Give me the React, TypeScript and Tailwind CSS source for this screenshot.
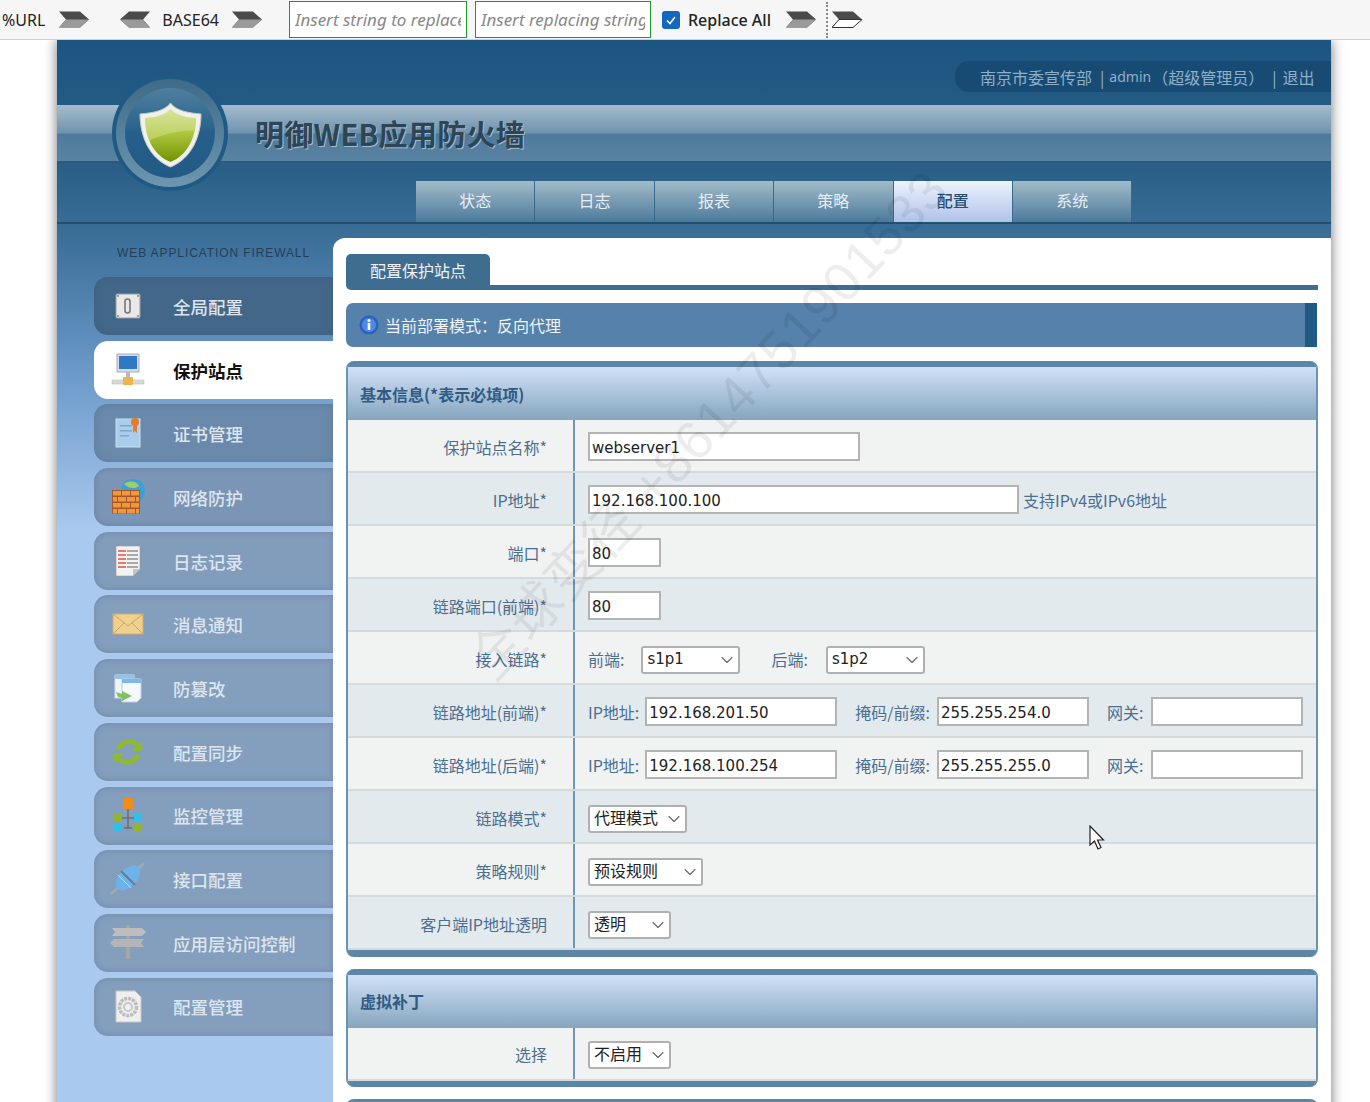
import React from 'react';
import { ChevronDown } from 'lucide-react';

const Arrow = ({ flip, hollow }: { flip?: boolean; hollow?: boolean }) => (
  <svg width="30" height="17" viewBox="0 0 30 17" className={flip ? '-scale-x-100' : ''}>
    <path d="M0 0.5H21L30 8.5L21 16.5H0L7 8.5Z" fill="#4a4a4a" />
    <path d="M7 8.5H30L21 16.5H0Z" fill={hollow ? '#fff' : '#9a9a9a'} stroke={hollow ? '#333' : 'none'} strokeWidth="1" />
  </svg>
);

const Logo = () => (
  <svg width="118" height="118" viewBox="0 0 118 118" className="absolute left-[54px] top-[35px]">
    <defs>
      <linearGradient id="ring" x1="0" y1="0" x2="0" y2="1">
        <stop offset="0" stopColor="#3f6a88" />
        <stop offset="1" stopColor="#6d97b0" />
      </linearGradient>
      <linearGradient id="core" x1="0" y1="0" x2="0" y2="1">
        <stop offset="0" stopColor="#4f7f9f" />
        <stop offset="0.5" stopColor="#26608a" />
        <stop offset="1" stopColor="#215a84" />
      </linearGradient>
      <linearGradient id="shield" x1="0" y1="0" x2="0" y2="1">
        <stop offset="0" stopColor="#d3e08a" />
        <stop offset="0.5" stopColor="#a9c23a" />
        <stop offset="1" stopColor="#6f9400" />
      </linearGradient>
    </defs>
    <circle cx="59" cy="58" r="58" fill="#1f5a85" />
    <circle cx="59" cy="58" r="54" fill="url(#ring)" />
    <circle cx="59" cy="58" r="45" fill="url(#core)" />
    <path d="M59.5 28C65 36 78 38 90 39C90 62 80 84 59.5 92C39 84 29 62 29 39C41 38 54 36 59.5 28Z" fill="#f1f1ec" stroke="#c9c9c4" />
    <path d="M59.5 34C65 40 76 43 85 43C85 62 77 80 59.5 87C42 80 34 62 34 43C43 43 54 40 59.5 34Z" fill="url(#shield)" />
    <path d="M59.5 34C65 40 76 43 85 43C85 48 84 53 83 56C68 55 50 60 38 66C35 58 34 50 34 43C43 43 54 40 59.5 34Z" fill="#e6efb4" opacity="0.35" />
  </svg>
);

const GlobalIcon = () => (
  <svg width="40" height="40" viewBox="0 0 40 40">
    <rect x="8" y="8" width="24" height="24" rx="1" fill="#e8e8e8" stroke="#999" />
    <circle cx="10" cy="10" r="1" fill="#888" /><circle cx="30" cy="10" r="1" fill="#888" />
    <circle cx="10" cy="30" r="1" fill="#888" /><circle cx="30" cy="30" r="1" fill="#888" />
    <rect x="17" y="13" width="5" height="14" rx="2.5" fill="none" stroke="#777" strokeWidth="1.6" />
  </svg>
);
const SiteIcon = () => (
  <svg width="40" height="40" viewBox="0 0 40 40">
    <rect x="9" y="4" width="22" height="18" fill="#d8dde2" stroke="#aab" />
    <rect x="11" y="6" width="18" height="13" fill="#2f78c4" />
    <rect x="18" y="22" width="4" height="6" fill="#b5bcc2" />
    <rect x="4" y="30" width="32" height="4" fill="#d4dcd8" stroke="#b0bab4" strokeWidth="0.5" />
    <rect x="15" y="27" width="10" height="8" rx="1" fill="#eeb54c" />
  </svg>
);
const CertIcon = () => (
  <svg width="40" height="40" viewBox="0 0 40 40">
    <rect x="8" y="6" width="24" height="28" fill="#a9cdea" stroke="#c9e0f2" />
    <rect x="12" y="12" width="12" height="1.5" fill="#7fa8c8" /><rect x="12" y="17" width="12" height="1.5" fill="#7fa8c8" />
    <rect x="12" y="22" width="9" height="1.5" fill="#7fa8c8" />
    <circle cx="27" cy="9" r="4" fill="#e9792b" /><path d="M25 11H29V20L27 18L25 20Z" fill="#e9792b" />
  </svg>
);
const WallIcon = () => (
  <svg width="40" height="40" viewBox="0 0 40 40">
    <circle cx="25" cy="14" r="12" fill="#3d9fd8" />
    <path d="M16 7C21 3 29 4 31 9C28 12 20 12 16 7Z" fill="#9ccf6a" />
    <rect x="4" y="13" width="28" height="24" fill="#a9562a" />
    {[14, 20, 26, 32].map(y => (
      <g key={y}>
        {(y % 12 === 2 ? [5, 14, 23] : [5, 10, 19, 28]).map(x => (
          <rect key={x} x={x} y={y} width={y % 12 === 2 ? 8 : x === 5 ? 4 : x === 28 ? 3 : 8} height="4.5" fill="#ef9a3a" />
        ))}
      </g>
    ))}
  </svg>
);
const LogIcon = () => (
  <svg width="40" height="40" viewBox="0 0 40 40">
    <path d="M8 5H32V28L25 35H8Z" fill="#f2f2f0" stroke="#999" strokeWidth="0.6" />
    <path d="M25 35L25 28H32Z" fill="#c4c4c0" />
    {[9, 13, 17, 21, 25].map(y => (
      <g key={y}><rect x="10" y={y} width="8" height="2" fill="#e47a72" /><rect x="19" y={y} width="11" height="2" fill="#a8a8a8" /></g>
    ))}
  </svg>
);
const MailIcon = () => (
  <svg width="40" height="40" viewBox="0 0 40 40">
    <rect x="5" y="10" width="30" height="20" fill="#efd08e" stroke="#d2ad68" />
    <path d="M5 10L20 22L35 10M5 30L16 19M35 30L24 19" fill="none" stroke="#cda762" />
  </svg>
);
const TamperIcon = () => (
  <svg width="40" height="40" viewBox="0 0 40 40">
    <rect x="7" y="7" width="19" height="23" fill="#eef4fa" stroke="#d0dde8" />
    <rect x="7" y="7" width="19" height="4" fill="#8ec3ee" />
    <path d="M14 11H33V30L29 34H14Z" fill="#f5f9fc" stroke="#c0d0de" />
    <rect x="14" y="11" width="19" height="4" fill="#7db8ea" />
    <path d="M8 24L14 26V23L24 28L14 33V30L10 29Z" fill="#7fc261" />
  </svg>
);
const SyncIcon = () => (
  <svg width="40" height="40" viewBox="0 0 40 40">
    <path d="M8 17C10 7 24 4 31 12L34 9V19H24L28 15C23 10 15 11 13 18Z" fill="#8dbb2c" />
    <path d="M32 23C30 33 16 36 9 28L6 31V21H16L12 25C17 30 25 29 27 22Z" fill="#8dbb2c" />
  </svg>
);
const MonitorIcon = () => (
  <svg width="40" height="40" viewBox="0 0 40 40">
    <rect x="15" y="2" width="10" height="11" rx="1" fill="#f28c14" />
    <path d="M20 13V32M12 22H28M16 32H24" stroke="#6e6e6e" strokeWidth="1.5" />
    <rect x="6" y="18" width="8" height="7" fill="#93b52c" /><rect x="26" y="18" width="8" height="7" fill="#2fc0ea" />
    <rect x="6" y="28" width="8" height="7" fill="#2fc0ea" /><rect x="26" y="28" width="8" height="7" fill="#93b52c" />
  </svg>
);
const PlugIcon = () => (
  <svg width="40" height="40" viewBox="0 0 40 40">
    <path d="M3 35L12 27M28 12L36 4" stroke="#a4a8ac" strokeWidth="2.5" />
    <ellipse cx="20" cy="19" rx="15" ry="9" transform="rotate(-45 20 19)" fill="#6db3ea" />
    <path d="M13 12L27 26" stroke="#6a7a88" strokeWidth="2" />
    <path d="M10 16L23 29" stroke="#b9dcf5" strokeWidth="1" />
  </svg>
);
const SignIcon = () => (
  <svg width="40" height="40" viewBox="0 0 40 40">
    <rect x="18" y="2" width="4" height="34" fill="#a6a6a6" />
    <path d="M4 5H34L38 9L34 13H4L7 9Z" fill="#bdbdbd" />
    <path d="M36 16H6L2 20L6 24H36L33 20Z" fill="#b5b5b5" />
  </svg>
);
const ConfigIcon = () => (
  <svg width="40" height="40" viewBox="0 0 40 40">
    <path d="M8 4H27L33 10V35H8Z" fill="#efefef" stroke="#c6c6c6" />
    <circle cx="20" cy="20" r="8.5" fill="none" stroke="#bcbcbc" strokeWidth="3.5" strokeDasharray="3 1" />
    <circle cx="20" cy="20" r="4" fill="none" stroke="#c8c8c8" strokeWidth="2" />
  </svg>
);

const menu = [
  { label: '全局配置', icon: <GlobalIcon />, color: 'bg-[#436789]' },
  { label: '保护站点', icon: <SiteIcon />, color: 'bg-white', active: true },
  { label: '证书管理', icon: <CertIcon />, color: 'bg-[#6b8aab]' },
  { label: '网络防护', icon: <WallIcon />, color: 'bg-[#7a95b5]' },
  { label: '日志记录', icon: <LogIcon />, color: 'bg-[#829dbc]' },
  { label: '消息通知', icon: <MailIcon />, color: 'bg-[#849fbe]' },
  { label: '防篡改', icon: <TamperIcon />, color: 'bg-[#849fbe]' },
  { label: '配置同步', icon: <SyncIcon />, color: 'bg-[#849fbe]' },
  { label: '监控管理', icon: <MonitorIcon />, color: 'bg-[#849fbe]' },
  { label: '接口配置', icon: <PlugIcon />, color: 'bg-[#849fbe]' },
  { label: '应用层访问控制', icon: <SignIcon />, color: 'bg-[#849fbe]' },
  { label: '配置管理', icon: <ConfigIcon />, color: 'bg-[#849fbe]' },
];

const tabs = ['状态', '日志', '报表', '策略', '配置', '系统'];

const inputCls =
  "h-[29px] border-2 border-[#b4b4b4] bg-white px-[2px] pt-[2px] text-[15px] text-[#222] outline-none font-['DejaVu_Sans','Noto_Sans_CJK_SC',sans-serif]";

const Field = ({ value, width }: { value?: string; width: string }) => (
  <input readOnly defaultValue={value} className={`${inputCls} ${width}`} />
);

const Picker = ({ value, width, cjk }: { value: string; width: string; cjk?: boolean }) => (
  <div className={`mt-[2px] flex h-[28px] items-center justify-between rounded-[3px] border-2 border-[#b0b0b0] bg-white pl-[4px] pr-[1px] text-[#222] font-['DejaVu_Sans','Noto_Sans_CJK_SC',sans-serif] ${cjk ? 'text-[16px]' : 'text-[15px]'} ${width}`}>
    <span>{value}</span>
    <ChevronDown size={20} strokeWidth={1.3} className="text-[#666]" />
  </div>
);

const Hint = ({ children, className = '' }: { children: React.ReactNode; className?: string }) => (
  <span className={`whitespace-nowrap text-[16px] text-[#4c6f8f] ${className}`}>{children}</span>
);

const Row = ({ label, alt, children }: { label: string; alt?: boolean; children: React.ReactNode }) => (
  <div className={`flex h-[53px] border-b-2 border-[#d5dadc] ${alt ? 'bg-[#e3eaee]' : 'bg-[#f1f3f3]'}`}>
    <div className="flex w-[227px] shrink-0 items-center justify-end border-r-2 border-[#6d96b8] pr-[26px] pt-[2px] text-[16px] text-[#4c6f8f]">
      {label}
    </div>
    <div className="flex flex-1 items-center pl-[13px] pt-[2px]">{children}</div>
  </div>
);

const Box = ({ title, children }: { title: string; children: React.ReactNode }) => (
  <section className="rounded-[8px] border-x-2 border-[#6d93b2] bg-[#5d85a6] pt-[6px] pb-[6.5px]">
    <h3 className="flex h-[53px] items-center bg-[linear-gradient(#d0e1f7,#86a5be)] pl-[12px] text-[16px] font-bold text-[#2f5b85]">
      {title}
    </h3>
    {children}
  </section>
);

const AddressRow = ({ label, alt, ip, mask }: { label: string; alt?: boolean; ip: string; mask: string }) => (
  <Row label={label} alt={alt}>
    <Hint>IP地址:</Hint>
    <Field value={ip} width="ml-[6px] w-[192px]" />
    <Hint className="ml-[18px]">掩码/前缀:</Hint>
    <Field value={mask} width="ml-[7px] w-[152px]" />
    <Hint className="ml-[18px]">网关:</Hint>
    <Field width="ml-[8px] w-[152px]" />
  </Row>
);

export default function App() {
  return (
    <div className="relative h-[1102px] overflow-hidden bg-white font-['Noto_Sans_CJK_SC','Noto_Sans',sans-serif]">
      {/* toolbar */}
      <div className="relative z-10 flex h-[40px] items-center border-b border-[#d0d0d0] bg-[#f6f6f6] pl-[2px] text-[16px] text-[#222] font-['Noto_Sans','Noto_Sans_CJK_SC',sans-serif]">
        <span>%URL</span>
        <span className="ml-[14px]"><Arrow /></span>
        <span className="ml-[31px]"><Arrow flip /></span>
        <span className="ml-[12px]">BASE64</span>
        <span className="ml-[13px]"><Arrow /></span>
        <input
          placeholder="Insert string to replace"
          className="ml-[27px] h-[37px] w-[178px] border border-[#1a9a2a] bg-white px-[5px] text-[17px] italic outline-none placeholder:text-[#888]"
        />
        <input
          placeholder="Insert replacing string"
          className="ml-[8px] h-[37px] w-[176px] border border-[#1a9a2a] bg-white px-[5px] text-[17px] italic outline-none placeholder:text-[#888]"
        />
        <span className="ml-[11px] flex h-[18px] w-[18px] items-center justify-center rounded-[3px] bg-[#1467c0]">
          <svg width="12" height="12" viewBox="0 0 12 12"><path d="M2 6.5L5 9.5L10 3" fill="none" stroke="#fff" strokeWidth="1.5" /></svg>
        </span>
        <span className="ml-[8px] font-medium">Replace All</span>
        <span className="ml-[15px]"><Arrow /></span>
        <span className="ml-[10px] h-[36px] border-l-2 border-dotted border-[#888]" />
        <span className="ml-[4px]"><Arrow hollow /></span>
      </div>

      {/* page */}
      <div className="relative ml-[57px] flex min-h-[1062px] w-[1274px] flex-col bg-[linear-gradient(#1c5580_0px,#2a6088_130px,#3f729c_210px,#6e9ccb_340px,#a9c9ee_490px)] shadow-[0_0_12px_rgba(0,0,0,0.55)]">
        <div className="flex h-[65px] shrink-0 items-start justify-end pt-[21px]">
          <div className="flex h-[31px] w-[376px] items-center whitespace-nowrap rounded-l-[14px] bg-[#184b74] pl-[25px] text-[16px] text-[#8fb0c9]">
            <span>南京市委宣传部</span>
            <span className="ml-[8px]">|</span>
            <span className="ml-[5px] font-['Noto_Sans',sans-serif] text-[14px]">admin</span>
            <span className="ml-[1px]">（超级管理员）</span>
            <span className="ml-[8px]">|</span>
            <span className="ml-[6px]">退出</span>
          </div>
        </div>
        <div className="flex h-[58px] shrink-0 items-center border-b-2 border-[#2b5a7f] bg-[linear-gradient(#a6bccd_0%,#6f93ad_50%,#4e7a9b_52%,#5a83a2_100%)] pl-[198px] pt-[2px]">
          <h1 className="text-[29px] font-bold tracking-[0.3px] text-[#2c4557] [text-shadow:1px_1px_0_#a5bccd]">
            明御WEB应用防火墙
          </h1>
        </div>
        <nav className="flex h-[61px] shrink-0 items-end border-b-2 border-[#21506f] pl-[359px]">
          {tabs.map(t => (
            <div
              key={t}
              className={`flex h-[41px] w-[119.4px] items-center justify-center border-r border-[#38688a] pb-[3px] text-[16px] ${
                t === '配置'
                  ? 'bg-[linear-gradient(#eef3fc,#aec2ea)] font-medium text-[#2b4f72]'
                  : 'bg-[linear-gradient(#a2bbc9,#4c7a9c)] text-[#e8eef3]'
              }`}
            >
              {t}
            </div>
          ))}
        </nav>
        <Logo />

        <div className="flex flex-1">
          <aside className="w-[276px] shrink-0 pl-[37px]">
            <p className="mt-[20px] mb-[15px] ml-[23px] whitespace-nowrap text-[12px] tracking-[0.9px] text-[#243f57] font-['Liberation_Sans',sans-serif]">
              WEB APPLICATION FIREWALL
            </p>
            <ul className="flex flex-col gap-[5.7px]">
              {menu.map(m => (
                <li
                  key={m.label}
                  className={`flex h-[58px] items-center rounded-l-[14px] pl-[14px] ${m.color} ${
                    m.active ? 'font-bold text-[#111]' : 'shadow-[inset_0_0_6px_rgba(50,70,100,0.25)] font-medium text-[#dde5ee]'
                  }`}
                >
                  <span className="flex w-[40px] justify-center">{m.icon}</span>
                  <span className="ml-[25px] mt-[2px] text-[17.5px]">{m.label}</span>
                </li>
              ))}
            </ul>
          </aside>

          <main className="relative mt-[14px] min-w-0 flex-1 rounded-tl-[12px] bg-white px-[13px] pt-[16px]">
            <div className="rounded-bl-[5px] border-b-[5px] border-[#3f6d90]">
              <div className="flex h-[31px] w-[144px] items-center justify-center rounded-t-[5px] bg-[#3f6d90] text-[16px] text-[#f0f4f7]">
                配置保护站点
              </div>
            </div>
            <div className="mt-[13px] flex h-[44px] w-[971px] items-center rounded-l-[7px] border-r-[12px] border-[#1f5a85] bg-[#5581aa] pl-[13px] text-[16px] text-[#f0f4f8]">
              <svg width="20" height="20" viewBox="0 0 20 20">
                <circle cx="10" cy="10" r="9.5" fill="#2a62c0" />
                <circle cx="10" cy="10" r="7" fill="#4f8be0" />
                <circle cx="10" cy="5.5" r="1.5" fill="#fff" />
                <rect x="8.7" y="8" width="2.6" height="7" fill="#fff" />
              </svg>
              <span className="ml-[6px]">当前部署模式：反向代理</span>
            </div>

            <div className="mt-[14px] flex flex-col gap-[12px]">
              <Box title="基本信息(*表示必填项)">
                <Row label="保护站点名称*">
                  <Field value="webserver1" width="w-[272px]" />
                </Row>
                <Row label="IP地址*" alt>
                  <Field value="192.168.100.100" width="w-[431px]" />
                  <Hint className="ml-[4px]">支持IPv4或IPv6地址</Hint>
                </Row>
                <Row label="端口*">
                  <Field value="80" width="w-[73px]" />
                </Row>
                <Row label="链路端口(前端)*" alt>
                  <Field value="80" width="w-[73px]" />
                </Row>
                <Row label="接入链路*">
                  <Hint>前端:</Hint>
                  <Picker value="s1p1" width="ml-[17px] w-[99px]" />
                  <Hint className="ml-[31px]">后端:</Hint>
                  <Picker value="s1p2" width="ml-[18px] w-[99px]" />
                </Row>
                <AddressRow label="链路地址(前端)*" alt ip="192.168.201.50" mask="255.255.254.0" />
                <AddressRow label="链路地址(后端)*" ip="192.168.100.254" mask="255.255.255.0" />
                <Row label="链路模式*" alt>
                  <Picker value="代理模式" cjk width="w-[99px]" />
                </Row>
                <Row label="策略规则*">
                  <Picker value="预设规则" cjk width="w-[115px]" />
                </Row>
                <Row label="客户端IP地址透明" alt>
                  <Picker value="透明" cjk width="w-[83px]" />
                </Row>
              </Box>

              <Box title="虚拟补丁">
                <Row label="选择">
                  <Picker value="不启用" cjk width="w-[83px]" />
                </Row>
              </Box>

              <div className="h-[20px] rounded-t-[8px] bg-[#5d85a6]" />
            </div>

            {/* cursor */}
            <svg width="18" height="28" viewBox="0 0 18 28" className="absolute left-[756px] top-[587px]">
              <path d="M1 1V20L5.5 16L9 24L12 22.5L8.5 15H14.5Z" fill="#fff" stroke="#222" strokeWidth="1.2" />
            </svg>
          </main>
        </div>
      </div>

      {/* watermark */}
      <div className="pointer-events-none absolute left-[365px] top-[367px] z-20 w-[720px] -rotate-[47deg] whitespace-nowrap text-[54px] tracking-[1px] text-black/[0.07] font-['Liberation_Sans','Noto_Sans_CJK_SC',sans-serif]">
        全球变径 +8614751901533
      </div>
    </div>
  );
}
